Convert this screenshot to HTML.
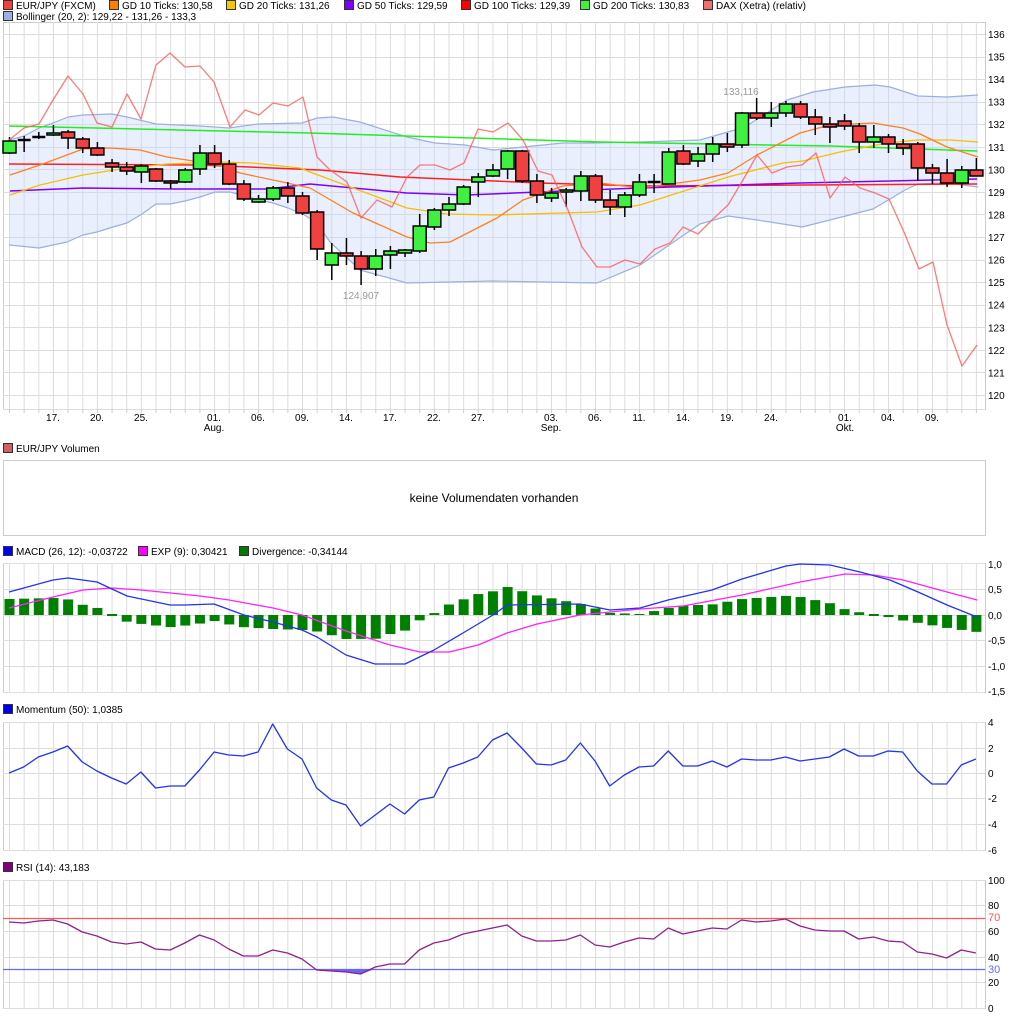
<!DOCTYPE html>
<html><head><meta charset="utf-8"><style>
body{margin:0;background:#fff;width:1025px;height:1019px;overflow:hidden;font-family:"Liberation Sans",Arial,sans-serif;}
svg{display:block}
text{font-family:"Liberation Sans",Arial,sans-serif;}
</style></head><body>
<svg id="s" width="1025" height="1019" xmlns="http://www.w3.org/2000/svg"></svg>
<script>
var S=document.getElementById('s'),h='';
function X(i){return 9+14.65*i;}
function ln(x1,y1,x2,y2,c,w){h+='<line x1="'+x1+'" y1="'+y1+'" x2="'+x2+'" y2="'+y2+'" stroke="'+c+'" stroke-width="'+(w||1)+'"/>';}
function tx(x,y,t,s,c,a){h+='<text x="'+x+'" y="'+y+'" font-size="'+(s||11)+'" fill="'+(c||'#000')+'"'+(a?' text-anchor="'+a+'"':'')+'>'+t+'</text>';}
function pl(p,c,w,f){h+='<polyline points="'+p.map(function(q){return q.join(',')}).join(' ')+'" fill="'+(f||'none')+'" stroke="'+c+'" stroke-width="'+(w||1)+'" stroke-linejoin="round"/>';}
function leg(x,y,c,t){h+='<rect x="'+(x+0.5)+'" y="'+(y-8.5)+'" width="9" height="9" fill="'+c+'" stroke="#333" stroke-width="1"/>';tx(x+13,y,t,10,'#000');}
function panel(y1,y2,hl){
  h+='<rect x="3.5" y="'+(y1+.5)+'" width="982" height="'+(y2-y1)+'" fill="#fff" stroke="#ccc"/>';
  for(var i=0;i<67;i++)ln(X(i)+.5,y1,X(i)+.5,y2,'#ddd');
  hl.forEach(function(y){ln(3,y+.5,985,y+.5,'#ddd');});
}
leg(3,9,'#f04040','EUR/JPY (FXCM)');leg(109,9,'#ff7f00','GD 10 Ticks: 130,58');leg(226,9,'#f5c800','GD 20 Ticks: 131,26');
leg(344,9,'#7f00ff','GD 50 Ticks: 129,59');leg(461,9,'#ff0000','GD 100 Ticks: 129,39');leg(580,9,'#40f040','GD 200 Ticks: 130,83');
leg(703,9,'#f07070','DAX (Xetra) (relativ)');leg(3,20,'#9ab0e0','Bollinger (20, 2): 129,22 - 131,26 - 133,3');
var hl=[];for(var p=120;p<=137;p++)hl.push(Math.round(34+(136-p)*22.56));hl.push(409);
panel(22,409,hl.filter(function(y){return y>=22&&y<=409}));
for(var p=120;p<=136;p++)tx(988,34+(136-p)*22.56+4,p,10);
for(var i=0;i<67;i++)ln(X(i)+.5,409,X(i)+.5,413,'#ccc');
var bu=[[9,140],[24,136],[39,128],[53,123],[68,117],[83,115],[112,114],[127,117],[156,124],[200,126],[229,128],[258,124],[302,123],[317,118],[333,117],[360,122],[407,137],[435,143],[465,145],[493,150],[523,147],[563,143],[593,143],[640,142],[700,140],[745,127],[787,100],[813,92],[845,87],[875,85],[890,87],[918,96],[947,97],[978,95]];
var bl=[[9,245],[39,248],[67,242],[83,235],[97,232],[113,227],[127,223],[142,214],[156,204],[170,204],[185,201],[200,197],[215,192],[230,192],[245,196],[259,200],[273,203],[288,208],[303,214],[317,223],[330,242],[360,270],[407,283],[493,281],[597,283],[640,265],[700,224],[728,216],[757,220],[802,227],[830,220],[873,209],[890,199],[905,190],[918,184],[947,183],[978,187]];
var poly=bu.concat(bl.slice().reverse());
pl(poly,'none',0,'rgba(200,215,250,0.4)');
pl(bu,'#9ab0e0',1.2);pl(bl,'#9ab0e0',1.2);
pl([[9,126],[310,133],[600,142],[830,146],[977,151]],'#22ee22',1.5);
pl([[9,164],[200,165],[320,170],[400,177],[540,183],[640,186],[977,184]],'#ff2020',1.5);
pl([[10,191],[83,188],[177,189],[267,189],[310,184],[407,193],[467,195],[563,191],[640,188],[800,183],[977,179]],'#8000ff',1.5);
pl([[10,195],[40,185],[83,175],[127,168],[167,164],[220,162],[253,163],[300,168],[310,172],[353,188],[407,208],[447,214],[493,215],[597,212],[640,205],[728,177],[783,163],[803,161],[840,152],[887,143],[918,140],[950,140],[978,142]],'#f5c000',1.3);
pl([[10,175],[40,165],[83,149],[110,148],[140,150],[167,157],[220,165],[240,173],[287,183],[310,188],[353,213],[407,237],[430,243],[450,242],[497,218],[523,200],[563,186],[600,183],[640,188],[700,180],[728,173],[757,155],[800,133],[830,125],[873,123],[903,128],[920,134],[947,147],[978,157]],'#ff8020',1.3);
var C=[[153,141,137,154],[140,140,136,152],[137,137,132,139],[135,133,125,136],[132,138,130,149],[139,148,137,153],[148,155,142,156],[163,167,159,172],[167,171,162,175],[172,166,164,183],[169,181,168,182],[181,183,180,189],[182,170,168,183],[169,153,145,175],[153,164,145,168],[164,184,160,185],[184,199,180,201],[202,199,195,203],[199,188,186,201],[188,196,182,203],[196,213,192,215],[212,249,210,260],[265,253,243,280],[253,256,238,265],[256,269,251,285],[269,256,249,276],[255,251,246,269],[253,250,249,257],[251,226,214,253],[227,210,208,230],[210,204,197,216],[204,187,185,205],[182,177,173,197],[176,170,164,177],[169,151,150,179],[151,181,150,183],[181,195,174,203],[198,193,188,202],[192,190,188,207],[191,176,171,201],[176,200,174,203],[200,207,190,215],[207,195,192,217],[195,182,174,197],[182,183,174,193],[184,152,148,184],[151,164,145,165],[161,154,147,167],[154,144,137,162],[144,147,133,152],[145,113,112,148],[113,118,98,120],[118,113,102,127],[113,104,101,117],[104,117,101,119],[117,124,109,135],[124,127,117,143],[121,126,114,130],[126,142,123,153],[142,137,125,148],[137,144,134,153],[144,148,139,155],[144,168,142,181],[168,173,164,184],[173,183,159,187],[183,170,166,188],[170,176,158,176]];
C.forEach(function(c,i){var x=X(i)+.5,o=c[0],cl=c[1],up=cl<=o&&!(o==cl),t=Math.min(o,cl),b=Math.max(o,cl);
 ln(x,c[2],x,c[3],'#000',1.5);
 if(b-t<1.5){ln(x-6.5,t,x+6.5,t,'#000',2.5);}
 else h+='<rect x="'+(x-6.5)+'" y="'+t+'" width="13" height="'+(b-t)+'" fill="'+(up?'#40f040':'#f04040')+'" stroke="#000" stroke-width="1.5"/>';});
pl([[9,140],[24,128],[39,124],[53,100],[68,76],[83,94],[97,123],[112,127],[127,94],[141,119],[156,65],[170,53],[185,67],[200,66],[214,82],[230,127],[245,110],[259,115],[273,103],[288,106],[303,97],[317,157],[330,170],[347,182],[361,218],[377,200],[392,207],[407,177],[420,165],[435,165],[450,170],[464,163],[478,129],[493,132],[508,123],[523,140],[538,171],[552,175],[568,210],[582,247],[597,267],[610,267],[625,260],[640,264],[655,249],[670,243],[683,227],[698,234],[713,219],[728,205],[743,180],[757,155],[772,173],[787,167],[802,165],[816,153],[830,198],[845,177],[860,188],[875,193],[889,199],[904,232],[919,269],[933,262],[947,325],[962,366],[977,345]],'rgba(255,90,90,0.8)',1.3);
tx(741,95,'133,116',10,'#999','middle');tx(361,299,'124,907',10,'#999','middle');
[[53,'17.'],[97,'20.'],[141,'25.'],[214,'01.'],[258,'06.'],[302,'09.'],[346,'14.'],[390,'17.'],[434,'22.'],[478,'27.'],[551,'03.'],[595,'06.'],[639,'11.'],[683,'14.'],[727,'19.'],[771,'24.'],[845,'01.'],[888,'04.'],[932,'09.']].forEach(function(a){tx(a[0],421,a[1],10,'#000','middle');});
tx(214,431,'Aug.',10,'#000','middle');tx(551,431,'Sep.',10,'#000','middle');tx(845,431,'Okt.',10,'#000','middle');
leg(3,452,'#d06060','EUR/JPY Volumen');
h+='<rect x="3.5" y="460.5" width="982" height="75" fill="#fff" stroke="#ccc"/>';
tx(494,502,'keine Volumendaten vorhanden',12,'#000','middle');
leg(3,555,'#0000ee','MACD (26, 12): -0,03722');leg(138,555,'#ff00ff','EXP (9): 0,30421');leg(239,555,'#007a00','Divergence: -0,34144');
panel(563,692,[563,589,615,640,666,692]);
[['1,0',564],['0,5',589],['0,0',615],['-0,5',640],['-1,0',666],['-1,5',691]].forEach(function(a){tx(988,a[1]+4,a[0],10);});
var mac=[[9,592],[53,580],[68,578],[97,582],[127,596],[170,605],[185,605],[214,604],[244,615],[273,622],[302,630],[317,637],[346,655],[375,664],[405,664],[434,650],[463,633],[493,615],[507,605],[580,604],[610,610],[640,608],[668,600],[712,590],[742,579],[786,566],[800,564],[830,565],[860,572],[890,580],[918,592],[947,605],[977,617]];
var ex=[[9,608],[53,597],[83,590],[112,588],[141,590],[200,596],[229,600],[273,608],[302,615],[346,631],[390,645],[420,652],[449,652],[478,645],[507,633],[537,624],[580,615],[640,609],[683,606],[742,595],[800,582],[845,574],[874,575],[903,580],[947,592],[977,600]];
function itp(a,x){for(var k=0;k<a.length-1;k++){if(x>=a[k][0]&&x<=a[k+1][0]){var t=(x-a[k][0])/(a[k+1][0]-a[k][0]);return a[k][1]+t*(a[k+1][1]-a[k][1]);}}return a[a.length-1][1];}
for(var i=0;i<67;i++){var x=X(i),d=itp(mac,x)-itp(ex,x);var t=615+Math.min(d,0),b=615+Math.max(d,0);if(b-t<1){t=614;b=616;}h+='<rect x="'+(x-4.5)+'" y="'+t+'" width="10" height="'+(b-t)+'" fill="#008000"/>';}
pl(ex,'#ff22ff',1.3);pl(mac,'#2233ee',1.3);
leg(3,713,'#0000ee','Momentum (50): 1,0385');
panel(722,850,[722,748,773,798,824,850]);
[['4',722],['2',748],['0',773],['-2',798],['-4',824],['-6',850]].forEach(function(a){tx(988,a[1]+4,a[0],10);});
var mo=[773,767,757,752,746,762,771,778,784,772,788,786,786,770,752,755,756,752,724,749,759,788,800,805,826,815,804,814,800,797,768,763,757,740,733,748,764,765,760,743,761,786,775,767,766,751,766,766,761,767,759,760,760,757,761,759,757,749,756,756,751,752,771,784,784,765,759];
pl(mo.map(function(y,i){return [X(i),y]}),'#2233ee',1.3);
leg(3,871,'#800080','RSI (14): 43,183');
panel(880,1008,[880,905,931,957,982,1008]);
[['100',880],['80',905],['60',931],['40',957],['20',982],['0',1008]].forEach(function(a){tx(988,a[1]+4,a[0],10);});
tx(988,921,'70',11,'#ff5555');tx(988,973,'30',11,'#6666ff');
var rs=[922,923,921,920,924,932,936,942,944,942,949,950,943,935,940,949,956,956,950,953,959,970,971,972,974,967,964,964,950,943,940,934,931,928,925,936,941,941,940,935,945,947,942,938,939,928,934,931,928,929,920,922,921,919,926,930,931,931,939,937,941,942,952,954,958,950,953];
h+='<polygon points="'+X(21)+',969 '+X(21)+',970 '+X(22)+',971 '+X(23)+',972 '+X(24)+',974 '+X(25)+',969" fill="#6666ff"/>';
ln(3,918.5,985,918.5,'#ff5555',1.2);ln(3,969.5,985,969.5,'#6666ff',1.2);
pl(rs.map(function(y,i){return [X(i),y]}),'#902090',1.3);
S.innerHTML=h;
</script>
</body></html>
